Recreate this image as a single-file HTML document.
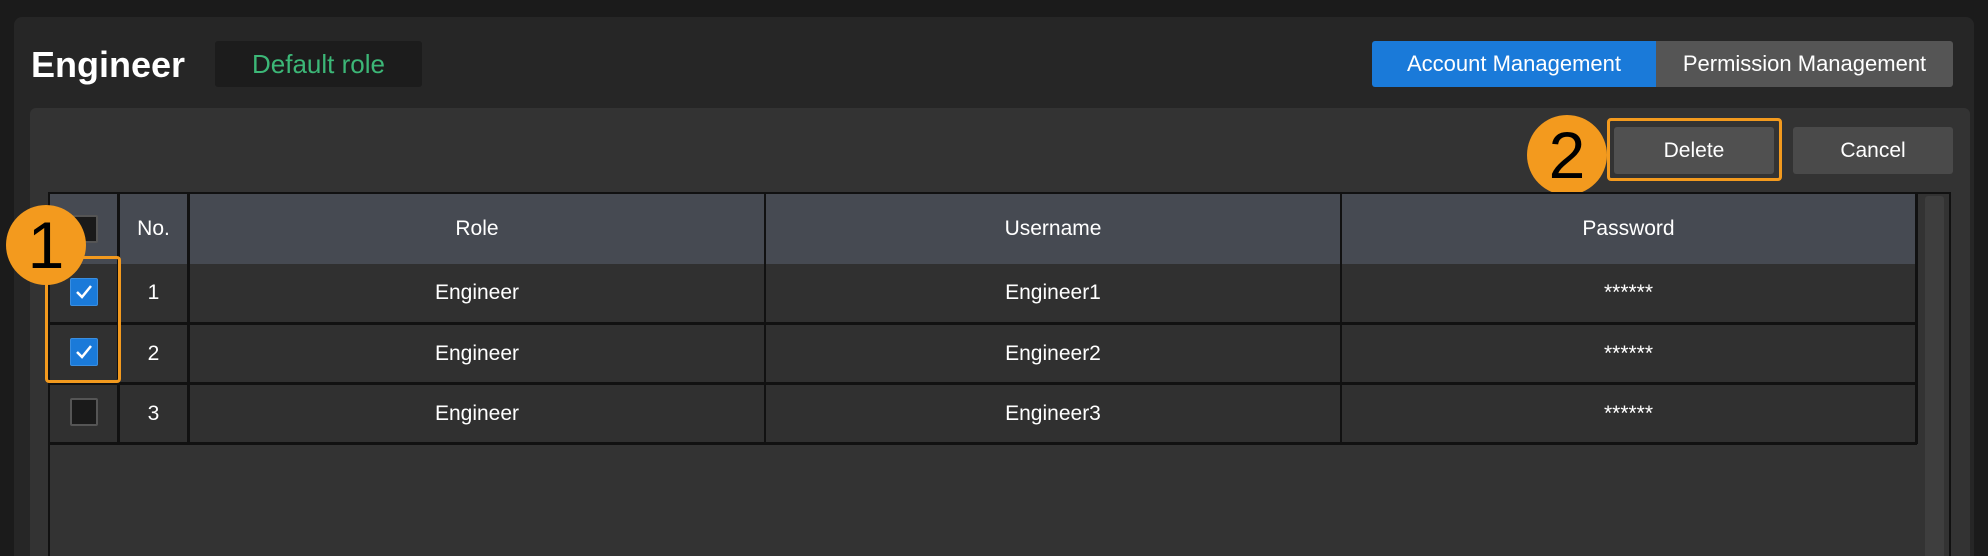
<!DOCTYPE html>
<html style="overflow:hidden"><head><style>
*{margin:0;padding:0;box-sizing:border-box}
html,body{width:1988px;height:556px;overflow:hidden}
body{background:#1b1b1b;position:relative;font-family:"Liberation Sans",sans-serif;color:#fff}
.a{position:absolute}
.t{display:flex;align-items:center;justify-content:center;font-size:21px}
.cb{position:absolute;left:70px;width:28px;height:28px;border-radius:2px}
.un{background:#1a1a1a;border:2px solid #555}
.ck{background:#1a7ad9;border:1px solid #3a8ee0}
.circ{position:absolute;width:80px;height:80px;border-radius:50%;background:#f39a1e;color:#000;font-size:66px;display:flex;align-items:center;justify-content:center;line-height:1}
</style></head><body>
<div class="a" style="left:14px;top:17px;width:1960px;height:539px;background:#262626;border-radius:8px 8px 0 0"></div>
<div class="a" style="left:31px;top:42px;font-size:36px;font-weight:bold;line-height:46px">Engineer</div>
<div class="a t" style="left:215px;top:41px;width:207px;height:46px;background:#1c1c1c;border-radius:3px;color:#3cb777;font-size:26px">Default role</div>
<div class="a t" style="left:1372px;top:41px;width:284px;height:46px;background:#1a7ad9;border-radius:3px 0 0 3px;font-size:22px">Account Management</div>
<div class="a t" style="left:1656px;top:41px;width:297px;height:46px;background:#555;border-radius:0 3px 3px 0;font-size:22px">Permission Management</div>
<div class="a" style="left:30px;top:108px;width:1940px;height:448px;background:#333;border-radius:6px 6px 0 0"></div>
<div class="a t" style="left:1614px;top:127px;width:160px;height:47px;background:#505050;border-radius:3px">Delete</div>
<div class="a" style="left:1607px;top:118px;width:175px;height:63px;border:3px solid #f39a1e;border-radius:4px"></div>
<div class="a t" style="left:1793px;top:127px;width:160px;height:47px;background:#4a4a4a;border-radius:3px">Cancel</div>
<div class="circ" style="left:1527px;top:115px">2</div>
<div class="a" style="left:48px;top:192px;width:1903px;height:380px;border:2px solid #111;border-bottom:none"></div>
<div class="a" style="left:1925px;top:196px;width:19px;height:370px;background:#3e3e3e;border-radius:3px"></div>
<div class="a" style="left:50px;top:194px;width:1867px;height:70px;background:#464a52"></div>
<div class="a" style="left:50px;top:264px;width:1867px;height:180px;background:#303030"></div>
<div class="a" style="left:50px;top:322px;width:1867px;height:3px;background:#111"></div>
<div class="a" style="left:50px;top:382px;width:1867px;height:3px;background:#111"></div>
<div class="a" style="left:50px;top:442px;width:1867px;height:3px;background:#111"></div>
<div class="a" style="left:117px;top:194px;width:3px;height:250px;background:#111"></div>
<div class="a" style="left:187px;top:194px;width:3px;height:250px;background:#111"></div>
<div class="a" style="left:764px;top:194px;width:2px;height:250px;background:#111"></div>
<div class="a" style="left:1340px;top:194px;width:2px;height:250px;background:#111"></div>
<div class="a" style="left:1915px;top:194px;width:3px;height:250px;background:#111"></div>
<div class="a t" style="left:120px;top:194px;width:67px;height:70px">No.</div>
<div class="a t" style="left:190px;top:194px;width:574px;height:70px">Role</div>
<div class="a t" style="left:766px;top:194px;width:574px;height:70px">Username</div>
<div class="a t" style="left:1342px;top:194px;width:573px;height:70px">Password</div>
<div class="a t" style="left:120px;top:264px;width:67px;height:58px">1</div>
<div class="a t" style="left:190px;top:264px;width:574px;height:58px">Engineer</div>
<div class="a t" style="left:766px;top:264px;width:574px;height:58px">Engineer1</div>
<div class="a t" style="left:1342px;top:264px;width:573px;height:58px">******</div>
<div class="a t" style="left:120px;top:325px;width:67px;height:57px">2</div>
<div class="a t" style="left:190px;top:325px;width:574px;height:57px">Engineer</div>
<div class="a t" style="left:766px;top:325px;width:574px;height:57px">Engineer2</div>
<div class="a t" style="left:1342px;top:325px;width:573px;height:57px">******</div>
<div class="a t" style="left:120px;top:385px;width:67px;height:57px">3</div>
<div class="a t" style="left:190px;top:385px;width:574px;height:57px">Engineer</div>
<div class="a t" style="left:766px;top:385px;width:574px;height:57px">Engineer3</div>
<div class="a t" style="left:1342px;top:385px;width:573px;height:57px">******</div>
<div class="cb un" style="top:215px"></div>
<div class="cb ck" style="top:278px"><svg width="26" height="26" viewBox="0 0 26 26"><path d="M6 13l5 5 9-11" stroke="#fff" stroke-width="2.5" fill="none"/></svg></div>
<div class="cb ck" style="top:338px"><svg width="26" height="26" viewBox="0 0 26 26"><path d="M6 13l5 5 9-11" stroke="#fff" stroke-width="2.5" fill="none"/></svg></div>
<div class="cb un" style="top:398px"></div>
<div class="a" style="left:45px;top:256px;width:76px;height:127px;border:3px solid #f39a1e;border-radius:4px"></div>
<div class="circ" style="left:6px;top:205px">1</div>
</body></html>
